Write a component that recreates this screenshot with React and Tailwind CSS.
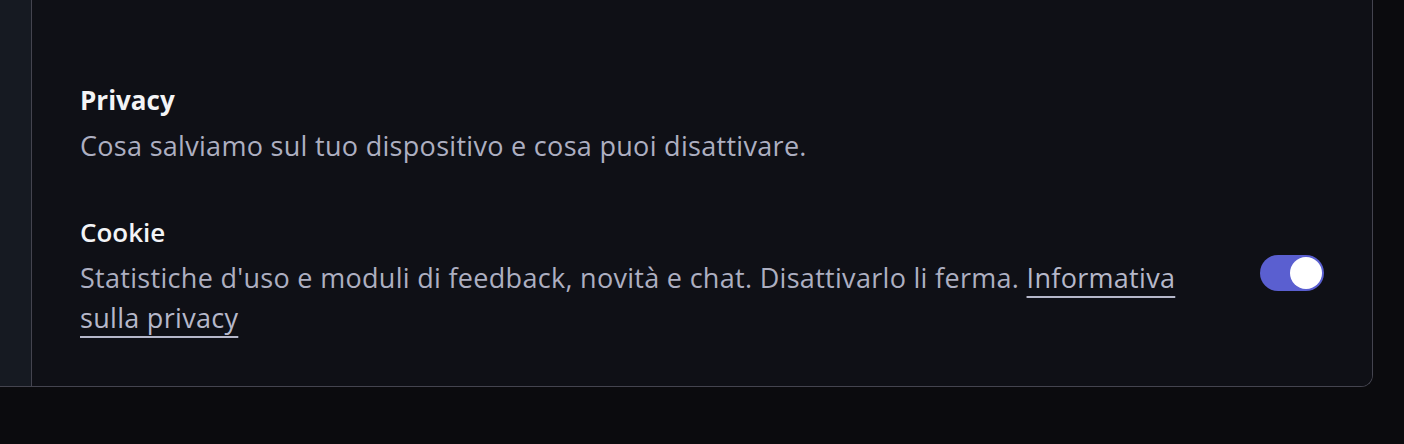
import React, { useState } from 'react';

const App = () => {
  const [cookies, setCookies] = useState(true);

  return (
    <div className="min-h-screen bg-[#0b0b0e] font-['Open_Sans',sans-serif]">
      {/* frame */}
      <div className="flex w-[1373px] h-[387px] border-r border-b border-[#44444f] rounded-br-[12px] overflow-hidden">
        <aside className="w-[32px] shrink-0 bg-[#161a22] border-r border-[#44444f]"></aside>

        <main className="flex-1 bg-[#0f1016] px-12 pt-[85px]">
          <section>
            <h2 className="text-[26px] leading-[30px] font-bold text-[#f3f4f6]">Privacy</h2>
            <p className="mt-[11px] text-[27px] leading-[40px] tracking-[0.3px] text-[#adafc1]">
              Cosa salviamo sul tuo dispositivo e cosa puoi disattivare.
            </p>
          </section>

          <section className="mt-[51px] flex items-center justify-between gap-12">
            <div className="max-w-[1132px]">
              <h3 className="text-[26px] leading-[30px] font-semibold text-[#f3f4f6]">Cookie</h3>
              <p className="mt-[11px] text-[27px] leading-[40px] tracking-[0.3px] text-[#adafc1]">
                Statistiche d'uso e moduli di feedback, novità e chat. Disattivarlo li ferma.{' '}
                <a href="#" className="text-[#b6b8ca] underline underline-offset-[8px] decoration-[2px] decoration-[#b6b8ca]">
                  Informativa sulla privacy
                </a>
              </p>
            </div>

            <button
              onClick={() => setCookies(!cookies)}
              className={`shrink-0 mb-[10px] w-[64px] h-[36px] rounded-full p-[2px] flex items-center ${
                cookies ? 'bg-[#5a5fd0] justify-end' : 'bg-[#3a3b48] justify-start'
              }`}
            >
              <span className="block w-[32px] h-[32px] rounded-full bg-white"></span>
            </button>
          </section>
        </main>
      </div>
    </div>
  );
};

export default App;
